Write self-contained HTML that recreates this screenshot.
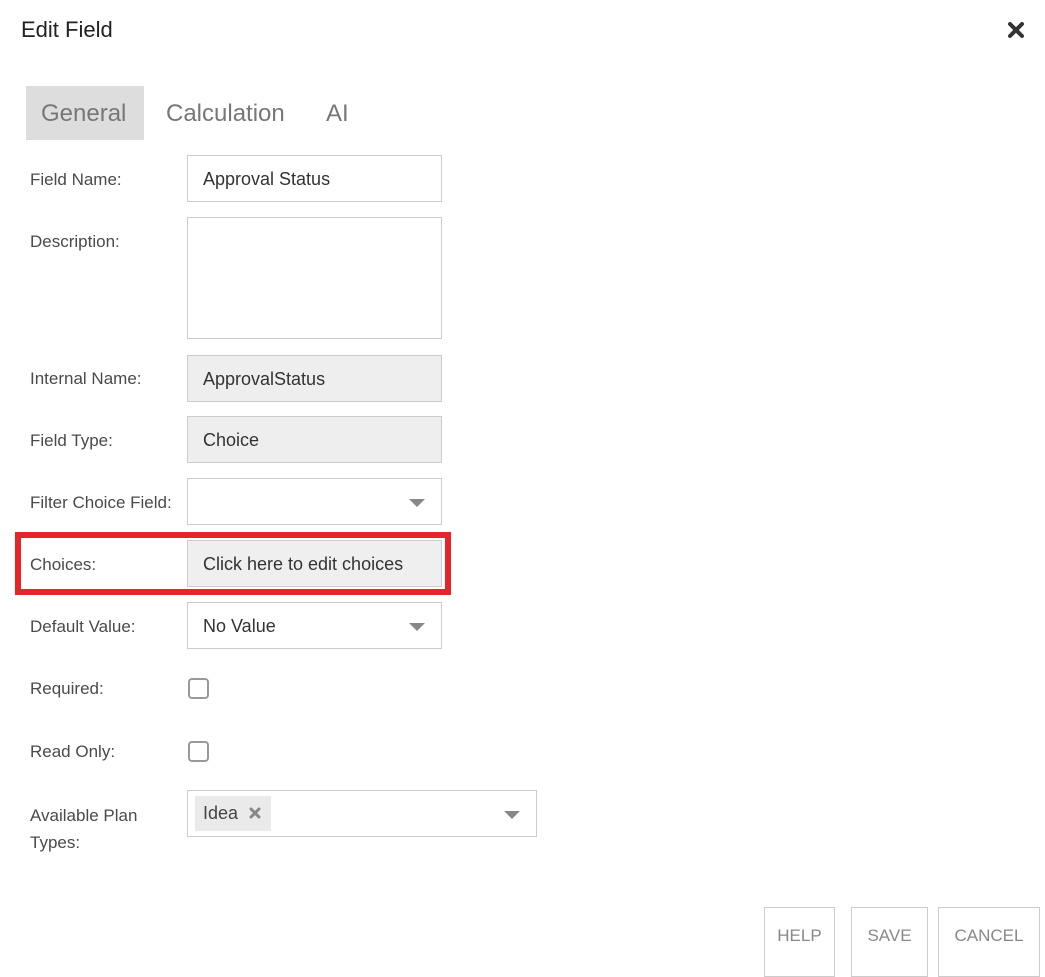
<!DOCTYPE html>
<html><head><meta charset="utf-8"><style>
*{box-sizing:border-box;margin:0;padding:0}
body{width:1045px;height:965px;background:#fff;position:relative;overflow:hidden;font-family:"Liberation Sans",sans-serif;color:#555}
.a{position:absolute}
.lbl{position:absolute;left:30px;font-size:17px;color:#4a4a4a}
.inp{position:absolute;left:187px;width:255px;height:47px;border:1px solid #ccc;background:#fff;font-size:18px;color:#333;padding-left:15px;line-height:46px}
.ro{background:#eee}
.arr{position:absolute;right:16px;top:20px;width:0;height:0;border-left:8px solid transparent;border-right:8px solid transparent;border-top:8px solid #888}
.cb{position:absolute;left:188px;width:21px;height:21px;border:2px solid #999;border-radius:4px}
.btn{position:absolute;top:907px;height:70px;border:1px solid #ccc;font-size:17px;color:#888;text-align:center;padding-top:18px}
</style></head><body>
<div class="a" style="left:21px;top:17px;font-size:22px;color:#222">Edit Field</div>
<svg class="a" style="left:1007px;top:21px" width="18" height="18" viewBox="0 0 18 18"><path d="M3 3L15 15M15 3L3 15" stroke="#333" stroke-width="4" stroke-linecap="round"/></svg>
<div class="a" style="left:26px;top:86px;width:118px;height:54px;background:#ddd"></div>
<div class="a" style="left:41px;top:100px;font-size:24px;color:#777">General</div>
<div class="a" style="left:166px;top:100px;font-size:24px;color:#777">Calculation</div>
<div class="a" style="left:326px;top:100px;font-size:24px;color:#777">AI</div>

<div class="lbl" style="top:170px">Field Name:</div>
<div class="inp" style="top:155px">Approval Status</div>
<div class="lbl" style="top:232px">Description:</div>
<div class="inp" style="top:217px;height:122px"></div>
<div class="lbl" style="top:369px">Internal Name:</div>
<div class="inp ro" style="top:355px">ApprovalStatus</div>
<div class="lbl" style="top:431px">Field Type:</div>
<div class="inp ro" style="top:416px">Choice</div>
<div class="lbl" style="top:493px">Filter Choice Field:</div>
<div class="inp" style="top:478px"><div class="arr"></div></div>
<div class="a" style="left:15px;top:532px;width:436px;height:63px;border:6px solid #e8232a"></div>
<div class="lbl" style="top:555px">Choices:</div>
<div class="inp ro" style="top:540px;background:#efefef">Click here to edit choices</div>
<div class="lbl" style="top:617px">Default Value:</div>
<div class="inp" style="top:602px">No Value<div class="arr"></div></div>
<div class="lbl" style="top:679px">Required:</div>
<div class="cb" style="top:678px"></div>
<div class="lbl" style="top:742px">Read Only:</div>
<div class="cb" style="top:741px"></div>
<div class="lbl" style="top:802px;line-height:27px">Available Plan<br>Types:</div>
<div class="inp" style="top:790px;width:350px;padding-left:0">
<div class="a" style="left:7px;top:5px;width:76px;height:35px;background:#eaeaea;font-size:18px;line-height:35px;padding-left:8px;color:#444">Idea</div>
<svg class="a" style="left:61px;top:16px" width="12" height="12" viewBox="0 0 12 12"><path d="M2 2L10 10M10 2L2 10" stroke="#888" stroke-width="3" stroke-linecap="round"/></svg>
<div class="arr"></div></div>

<div class="btn" style="left:764px;width:71px">HELP</div>
<div class="btn" style="left:851px;width:77px">SAVE</div>
<div class="btn" style="left:938px;width:102px">CANCEL</div>
</body></html>
